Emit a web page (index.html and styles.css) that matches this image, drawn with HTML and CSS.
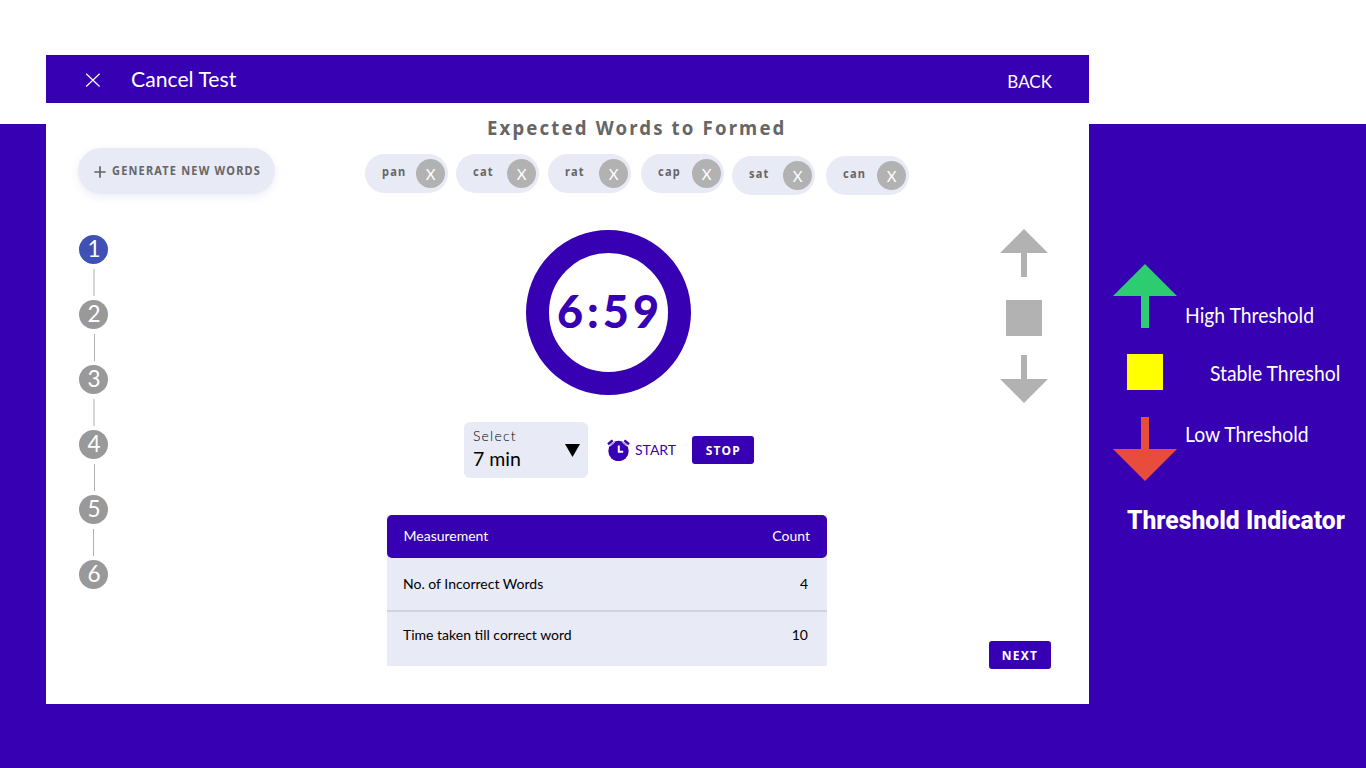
FILE: index.html
```html
<!DOCTYPE html>
<html lang="en">
<head>
<meta charset="utf-8">
<title>Cancel Test</title>
<link rel="stylesheet" href="styles.css">
</head>
<body>
<div class="page">
  <main class="card">
    <header class="topbar">
      <svg class="close" width="16" height="16" viewBox="0 0 16 16"><path d="M1.2 1.7 14.6 14.5M14.6 1.7 1.2 14.5" stroke="#fff" stroke-width="1.2" fill="none"/></svg>
      <h1 class="topbar-title">Cancel Test</h1>
      <a class="back">BACK</a>
    </header>
    <div class="content">
      <section class="left">
        <button class="generate">
          <svg width="12" height="12" viewBox="0 0 12 12"><path d="M6 .3V11.7M.3 6H11.7" stroke="#666" stroke-width="1.7"/></svg>
          <span>GENERATE NEW WORDS</span>
        </button>
        <div class="steps">
          <div class="step active">1</div><i class="line wide"></i>
          <div class="step">2</div><i class="line"></i>
          <div class="step">3</div><i class="line wide"></i>
          <div class="step">4</div><i class="line"></i>
          <div class="step">5</div><i class="line early"></i>
          <div class="step">6</div>
        </div>
      </section>
      <section class="center">
        <h2 class="heading">Expected Words to Formed</h2>
        <div class="chips">
          <div class="chip"><span>pan</span><b>X</b></div>
          <div class="chip g8"><span>cat</span><b>X</b></div>
          <div class="chip g9"><span>rat</span><b>X</b></div>
          <div class="chip g10"><span>cap</span><b>X</b></div>
          <div class="chip g8 low"><span>sat</span><b>X</b></div>
          <div class="chip g11 low"><span>can</span><b>X</b></div>
        </div>
        <div class="timer"><span>6:59</span></div>
        <div class="controls">
          <div class="select">
            <div><div class="select-label">Select</div><div class="select-value">7 min</div></div>
            <svg width="15" height="13" viewBox="0 0 15 13"><path d="M0 0H15L7.5 13Z"/></svg>
          </div>
          <div class="start">
            <svg width="24" height="22" viewBox="0 0 24 22"><circle cx="11.5" cy="12" r="10.2" fill="#3700b3"/><path d="M1 5.2 5.6 1.4M22 5.2 17.4 1.4" stroke="#3700b3" stroke-width="2.4"/><path d="M3.2 7 7.8 2.9M19.8 7 15.2 2.9" stroke="#fff" stroke-width="1"/><path d="M11.8 6.5V12.8H16.2" stroke="#fff" stroke-width="2" fill="none"/></svg>
            <span>START</span>
          </div>
          <button class="btn stop"><span>STOP</span></button>
        </div>
        <div class="table">
          <div class="row head"><span>Measurement</span><span>Count</span></div>
          <div class="row first"><span>No. of Incorrect Words</span><span>4</span></div>
          <div class="row"><span>Time taken till correct word</span><span>10</span></div>
        </div>
      </section>
      <section class="right">
        <svg width="48" height="48" viewBox="0 0 48 48"><path d="M24 0 48 24H27V48H21V24H0Z" fill="#b2b2b2"/></svg>
        <div class="square"></div>
        <svg width="48" height="48" viewBox="0 0 48 48"><path d="M24 48 48 24H27V0H21V24H0Z" fill="#b2b2b2"/></svg>
        <button class="btn next"><span>NEXT</span></button>
      </section>
    </div>
  </main>
  <aside class="legend">
    <div class="item"><svg width="64" height="64" viewBox="0 0 64 64"><path d="M32 0 64 32H36V64H28V32H0Z" fill="#2ecc71"/></svg><span class="high">High Threshold</span></div>
    <div class="item mid"><div class="yellow"></div><span class="stable">Stable Threshol</span></div>
    <div class="item"><svg width="64" height="64" viewBox="0 0 64 64"><path d="M32 64 64 32H36V0H28V32H0Z" fill="#e74c3c"/></svg><span class="lowt">Low Threshold</span></div>
    <h3 class="legend-title">Threshold Indicator</h3>
  </aside>
</div>
</body>
</html>
```
FILE: styles.css
```css
* { box-sizing: border-box; }
body { margin: 0; font-family: Lato, sans-serif; background: #3700b3; }
h1, h2, h3 { margin: 0; font-weight: 400; }
button { border: 0; padding: 0; font: inherit; }
svg { display: block; flex: none; }
span { white-space: nowrap; }
.page { width: 1366px; height: 768px; overflow: hidden; display: flex; padding: 55px 0 0 46px; background: linear-gradient(#fff 124px, #3700b3 124px); }
.card { width: 1043px; height: 649px; background: #fff; flex: none; }
.topbar { height: 48px; background: #3700b3; color: #fff; display: flex; align-items: center; padding: 2px 37px 0 39px; }
.topbar-title { font-size: 21.5px; line-height: 28px; margin: -2px 0 0 30px; transform: scaleX(.985); transform-origin: left; }
.back { margin-left: auto; font-size: 17px; line-height: 24px; padding-top: 3px; }
.content { display: grid; grid-template-columns: 319px 544px 180px; height: 601px; }
.left { padding: 45px 0 0 32px; }
.generate { width: 197px; height: 46px; border-radius: 23px; background: #e8eaf6; color: #666; display: flex; align-items: center; gap: 6px; padding-left: 16px; box-shadow: 0 3px 8px rgba(80, 90, 170, .1); font: 700 12px/16px "Noto Sans", sans-serif; letter-spacing: 1.3px; }
.generate span { transform: scaleX(.915); transform-origin: left; }
.generate svg { margin-top: 2px; }
.steps { display: flex; flex-direction: column; align-items: center; width: 29px; margin: 41px 0 0 1px; }
.step { width: 29px; height: 29px; border-radius: 50%; background: #999; color: #fff; font-size: 22.5px; line-height: 28px; text-align: center; padding-left: 1px; }
.step.active { background: #3f51b5; }
.line { width: 1px; height: 27px; margin: 5px 0 4px 1px; background: #b0b0b0; }
.line.wide { width: 2px; margin-left: 0; background: #d6d6d6; }
.line.early { margin-left: 0; margin-right: 1px; }
.center { display: flex; flex-direction: column; }
.heading { font: 700 20px/26px "Noto Sans", sans-serif; letter-spacing: 2.3px; color: #666; margin: 12px 0 0 122px; white-space: nowrap; transform: scaleX(.93); transform-origin: left; }
.chips { display: flex; margin-top: 13px; height: 41px; }
.chip { width: 83px; height: 39px; border-radius: 20px; background: #e8eaf6; display: flex; align-items: center; justify-content: space-between; padding: 0 3px 0 17px; color: #666; font: 700 12px/16px "Noto Sans", sans-serif; letter-spacing: 1.3px; }
.chip span { margin-top: -4px; transform: scaleX(.92); transform-origin: left; }
.chip b { width: 29px; height: 29px; border-radius: 50%; background: #b2b2b2; color: #fff; font: 400 15px/30px Lato, sans-serif; letter-spacing: 0; text-align: center; }
.g8 { margin-left: 8px; } .g9 { margin-left: 9px; } .g10 { margin-left: 10px; } .g11 { margin-left: 11px; }
.chip.low { margin-top: 2px; }
.timer { width: 165px; height: 165px; border: 23px solid #3700b3; border-radius: 50%; margin: 35px 0 0 161px; display: flex; align-items: center; justify-content: center; color: #3700b3; font-size: 45px; font-weight: 900; letter-spacing: 4px; line-height: 50px; }
.timer span { margin: -3px 0 0 3px; }
.controls { display: flex; align-items: center; margin: 27px 0 0 99px; height: 56px; }
.select { width: 124px; height: 56px; border-radius: 6px; background: #e8eaf6; display: flex; align-items: center; justify-content: space-between; padding: 0 8px 0 9px; }
.select-label { font: 300 14px/20px Lato, sans-serif; letter-spacing: 1.2px; color: #000; margin-top: -3px; }
.select-value { font-size: 19.5px; line-height: 25px; }
.start { display: flex; align-items: center; gap: 4px; margin-left: 19px; width: 85px; color: #3700b3; font-size: 14px; }
.start span { margin-top: -2px; }
.btn { background: #3700b3; color: #fff; border-radius: 3px; width: 62px; height: 28px; font: 700 12.5px/30px "Noto Sans", sans-serif; letter-spacing: 1.3px; text-align: center; }
.btn span { display: inline-block; transform: scaleX(.96); }
.table { width: 440px; height: 151px; margin: 37px 0 0 22px; background: #e8eaf6; font-size: 14px; color: #000; }
.row { display: flex; justify-content: space-between; align-items: center; height: 54px; padding: 0 19px 9px 16px; }
.row.head { background: #3700b3; color: #fff; height: 43px; border-radius: 5px; padding: 0 17px 3px 16.5px; }
.row.first { border-bottom: 2px solid #d0d2e0; padding-bottom: 2px; }
.right { display: flex; flex-direction: column; align-items: center; padding: 126px 0 0 50px; }
.square { width: 36px; height: 36px; background: #b2b2b2; margin: 23px 0 19px; }
.next { margin: 238px 0 0 -8px; }
.legend { width: 277px; padding: 209px 0 0 24px; color: #fff; flex: none; }
.item { display: flex; height: 64px; font-size: 21.5px; line-height: 28px; gap: 7.5px; }
.item span { transform: scaleX(.9); transform-origin: left; }
.item.mid { height: 36px; margin: 26px 0 27px; padding-left: 14px; gap: 47px; }
.yellow { width: 36px; height: 36px; background: #ff0; flex: none; }
.high { padding-top: 37px; } .stable { padding-top: 5px; } .lowt { padding-top: 3px; }
.legend-title { font: 800 26px/32px Roboto, sans-serif; margin: 23px 0 0 14px; white-space: nowrap; transform: scaleX(.95); transform-origin: left; }
```
